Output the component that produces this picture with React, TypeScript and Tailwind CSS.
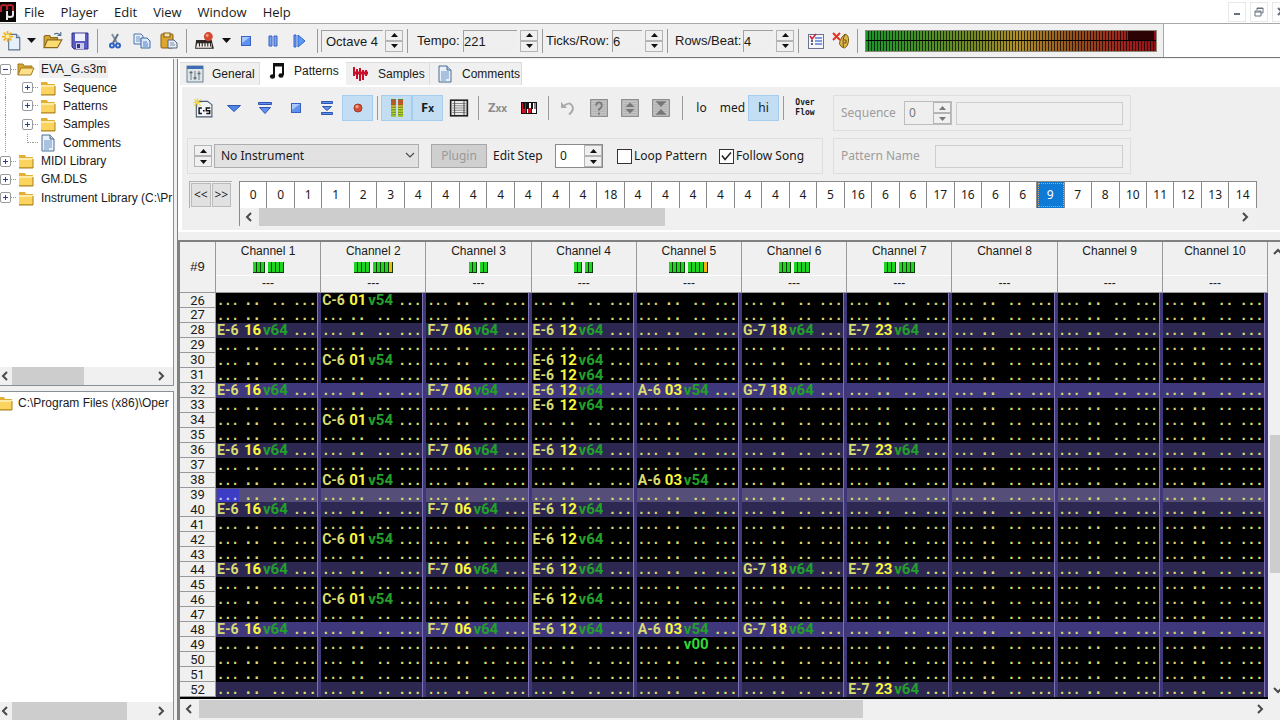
import type { ReactNode } from "react";
import clsx from "clsx";

type Cell = { note?: string; inst?: string; vol: string };

const CHANNELS = [
  { name: "Channel 1", left: 3, right: 4, peak: false },
  { name: "Channel 2", left: 4, right: 5, peak: true },
  { name: "Channel 3", left: 2, right: 2, peak: false },
  { name: "Channel 4", left: 2, right: 2, peak: false },
  { name: "Channel 5", left: 4, right: 5, peak: true },
  { name: "Channel 6", left: 3, right: 4, peak: false },
  { name: "Channel 7", left: 3, right: 4, peak: false },
  { name: "Channel 8", left: 0, right: 0, peak: false },
  { name: "Channel 9", left: 0, right: 0, peak: false },
  { name: "Channel 10", left: 0, right: 0, peak: false },
];

const ORDERS = [
  0, 0, 1, 1, 2, 3, 4, 4, 4, 4, 4, 4, 4, 18, 4, 4, 4, 4, 4, 4, 4, 5, 16, 6, 6,
  17, 16, 6, 6, 9, 7, 8, 10, 11, 12, 13, 14,
];
const CURRENT_ORDER = 29;
const PLAY_ROW = 39;
const ROWS = Array.from({ length: 27 }, (_, i) => 26 + i);

const TRACKS: { cell: Cell; rows: number[] }[] = [
  { cell: { note: "E-6", inst: "16", vol: "v64" }, rows: [28, 32, 36, 40, 44, 48] },
  { cell: { note: "C-6", inst: "01", vol: "v54" }, rows: [26, 30, 34, 38, 42, 46] },
  { cell: { note: "F-7", inst: "06", vol: "v64" }, rows: [28, 32, 36, 40, 44, 48] },
  {
    cell: { note: "E-6", inst: "12", vol: "v64" },
    rows: [28, 30, 31, 32, 33, 36, 40, 42, 44, 46, 48],
  },
  { cell: { note: "A-6", inst: "03", vol: "v54" }, rows: [32, 38, 48] },
  { cell: { note: "G-7", inst: "18", vol: "v64" }, rows: [28, 32, 44, 48] },
  { cell: { note: "E-7", inst: "23", vol: "v64" }, rows: [28, 36, 44, 52] },
];

function getCell(channel: number, row: number): Cell | undefined {
  if (channel === 4 && row === 49) return { vol: "v00" };
  const track = TRACKS[channel];
  return track?.rows.includes(row) ? track.cell : undefined;
}

/* ---------- icons ---------- */

function Svg({ size = 18, children }: { size?: number; children: ReactNode }) {
  return (
    <svg width={size} height={size} viewBox="0 0 18 18" fill="none" className="shrink-0" aria-hidden="true">
      {children}
    </svg>
  );
}

const Logo = () => (
  <svg width="16" height="20" viewBox="0 0 16 20" aria-hidden="true">
    <rect width="16" height="20" fill="#0a0505" />
    <path d="M1 10V5q0-2 3-2t3 2v3V5q0-2 3-2t3 2v4" stroke="#b3202c" strokeWidth="2" fill="none" />
    <path d="M7 18V9v4q0 2 3 2t3-2V9" stroke="#e8e8e8" strokeWidth="2" fill="none" />
  </svg>
);

const NewIcon = () => (
  <Svg size={20}>
    <path d="M6 3h7l3 3v11H6z" fill="#e6f0fb" stroke="#5d7591" />
    <path d="M13 3v3h3" stroke="#5d7591" fill="#b9d0ea" />
    <path d="M5 0v10M0 5h10M1.5 1.5l7 7M8.5 1.5l-7 7" stroke="#f2b01c" strokeWidth="1.5" />
    <circle cx="5" cy="5" r="1.8" fill="#fff3a0" />
  </Svg>
);

const FolderOpenIcon = () => (
  <Svg size={20}>
    <path d="M1 15V5l1-1h4l1 2h6v3" fill="#d8a52e" stroke="#8a6a1f" />
    <path d="M1 15l3-7h13l-4 7z" fill="#fbdc72" stroke="#8a6a1f" />
    <path d="M10 3q3-2 6 1m0-3v3h-3" stroke="#54708e" />
  </Svg>
);

const SaveIcon = () => (
  <Svg>
    <path d="M1 1h16v16H3l-2-2z" fill="#5b5bc4" stroke="#35358a" />
    <path d="M4 1.5h10V9H4z" fill="#eef0fb" />
    <path d="M5 11h8v6H5z" fill="#c9cbe6" />
    <path d="M6 12h3v4H6z" fill="#35358a" />
  </Svg>
);

const CutIcon = () => (
  <Svg>
    <path d="M6 2l5 9" stroke="#8794a6" strokeWidth="2" />
    <path d="M12 2L7 11" stroke="#5f6f85" strokeWidth="2" />
    <circle cx="6" cy="13.5" r="2" stroke="#2f63c4" strokeWidth="2" />
    <circle cx="12" cy="13.5" r="2" stroke="#2f63c4" strokeWidth="2" />
  </Svg>
);

const CopyIcon = () => (
  <Svg>
    <path d="M1 2h7l2 2v8H1z" fill="#e6f0fb" stroke="#4d74ac" />
    <path d="M3 5h4M3 7h5M3 9h5" stroke="#6c92c6" />
    <path d="M8 6h6l3 3v7H8z" fill="#dbe9fa" stroke="#3e66a4" />
    <path d="M10 10h4M10 12h5M10 14h5" stroke="#4d7cc0" />
  </Svg>
);

const PasteIcon = () => (
  <Svg>
    <rect x="1" y="2" width="12" height="14" rx="1" fill="#dda62c" stroke="#84601a" />
    <rect x="4" y="1" width="6" height="4" fill="#f6e4a6" stroke="#84601a" />
    <path d="M8 8h6l3 3v5H8z" fill="#e3ebf5" stroke="#56657a" />
    <path d="M10 11h4M10 13h5" stroke="#8393a9" />
  </Svg>
);

const MidiRecordIcon = () => (
  <Svg size={20}>
    <path d="M1 8h14l2 8H0z" fill="#2c2725" />
    <path d="M2 11h13v4H1z" fill="#f1ece8" />
    <path d="M4 10v4M6.5 10v4M9 10v4M11.5 10v4M14 10v4" stroke="#2c2725" />
    <circle cx="12" cy="5" r="4" fill="#d4482f" />
    <circle cx="11" cy="4" r="1.3" fill="#f39d86" />
  </Svg>
);

const DownTri = () => (
  <svg width="9" height="5" viewBox="0 0 9 5" aria-hidden="true">
    <path d="M0 0h9L4.5 5z" fill="#111" />
  </svg>
);

const StopIcon = () => (
  <Svg>
    <rect x="4.5" y="4.5" width="9" height="9" fill="#5f92ee" stroke="#3761c2" />
    <path d="M5 5h8l-8 6z" fill="#a9c8fb" />
  </Svg>
);

const PauseIcon = () => (
  <Svg>
    <path d="M5 4h3v10H5zM10 4h3v10h-3z" fill="#78a5f0" stroke="#3761c2" />
  </Svg>
);

const PlayIcon = () => (
  <Svg>
    <path d="M3 3h2v12H3z" fill="#78a5f0" stroke="#2d63cf" />
    <path d="M7 3l7 6-7 6z" fill="#5b9af2" stroke="#2d63cf" />
  </Svg>
);

const OptionsIcon = () => (
  <Svg>
    <rect x="1.5" y="2.5" width="15" height="14" fill="#f4f6fc" stroke="#6a7390" />
    <path d="M8 6h7M8 9h7M8 12h7" stroke="#5a7fd0" strokeWidth="1.5" />
    <path d="M4 9h2M4 12h2" stroke="#333" strokeWidth="1.5" />
    <path d="M3 4l2 3 4-5" stroke="#cf1f2b" strokeWidth="1.5" />
  </Svg>
);

const PanicIcon = () => (
  <Svg>
    <path d="M8 9l2-4 3-3q4 1 3.5 7.5-.5 5-4 6.5-3 0-5-4z" fill="#e0b94a" stroke="#7a5a14" />
    <path d="M13 3q-3 4-1.5 12" stroke="#6e5214" />
    <path d="M12 8h2v3h-2" stroke="#6e5214" />
    <path d="M1 1l7 7M8 1L1 8" stroke="#e03524" strokeWidth="2" />
  </Svg>
);

const FolderIcon = ({ open = false }: { open?: boolean }) => (
  <Svg>
    {open ? (
      <>
        <path d="M1 15V4h5l1 2h8v3" fill="#d8a52e" stroke="#a07a22" />
        <path d="M1 15l3-7h13l-3 7z" fill="#fde08a" stroke="#a07a22" />
      </>
    ) : (
      <>
        <path d="M2 3h6l1 2h7v11H2z" fill="#e2ae34" />
        <path d="M2 6h14v9H2z" fill="#fbd45f" />
        <path d="M2 6h14v2H2z" fill="#fdeaa6" />
        <path d="M2 16h14V7" stroke="#a9801f" />
      </>
    )}
  </Svg>
);

const DocIcon = () => (
  <Svg>
    <path d="M3 1h8l4 4v12H3z" fill="#e8f0fa" stroke="#4a6a94" />
    <path d="M11 1v4h4" fill="#b4cae6" stroke="#4a6a94" />
    <path d="M5 7h8M5 9h8M5 11h8M5 13h8M5 15h5" stroke="#6b93c4" />
  </Svg>
);

const GeneralIcon = () => (
  <Svg>
    <rect x="1" y="1" width="16" height="16" fill="#dfe5e6" stroke="#6c8298" />
    <path d="M1 2.5h16" stroke="#3d6db5" strokeWidth="3" />
    <path d="M5 6v9M9 6v9M13 6v9" stroke="#6c7a88" />
    <path d="M3.5 7.5h3M7.5 13h3M11.5 8.5h3" stroke="#59646e" strokeWidth="1.5" />
  </Svg>
);

const NotesIcon = () => (
  <Svg>
    <path d="M6 14V2h9v11" stroke="#111" strokeWidth="2" />
    <path d="M6 3h9" stroke="#111" strokeWidth="3" />
    <ellipse cx="4.5" cy="14.5" rx="2.6" ry="2.2" fill="#111" />
    <ellipse cx="13" cy="13.5" rx="2.6" ry="2.2" fill="#111" />
  </Svg>
);

const WaveIcon = () => (
  <Svg>
    <path d="M2 8h14" stroke="#c8102a" strokeWidth="3" />
    <path d="M2 2v9M5 4v10M8 3v13M11 5v10M14 5v6" stroke="#c8102a" strokeWidth="2" />
  </Svg>
);

const NewPatternIcon = () => (
  <Svg size={20}>
    <path d="M3 3h10l4 3v11H3z" fill="#f1f5fa" stroke="#4b5a72" />
    <path d="M4 0v8M0 4h8M1 1l6 6M7 1L1 7" stroke="#ecd94c" />
    <path d="M8 9H5.5v5H8M9 11.5h1.5M15.5 9H12v2.5h3V14h-3" stroke="#111" strokeWidth="1.3" />
  </Svg>
);

const PlayDownIcon = () => (
  <Svg>
    <path d="M2.5 6.5h13L9 12.5z" fill="#4f86ea" stroke="#2f55b0" />
  </Svg>
);

const PlayFromStartIcon = () => (
  <Svg>
    <path d="M2.5 3.5h13v2h-13zM3.5 8.5h11L9 14.5z" fill="#5f92ee" stroke="#2f55b0" />
  </Svg>
);

const PlayRowIcon = () => (
  <Svg>
    <path d="M3.5 2.5h11v2h-11zM4.5 7.5h9L9 11.5zM3.5 13.5h11v2h-11z" fill="#5f92ee" stroke="#2f55b0" />
  </Svg>
);

const RecordIcon = () => (
  <Svg>
    <circle cx="9" cy="9" r="4" fill="#d65038" stroke="#a03a2a" />
    <circle cx="8" cy="7.5" r="1.5" fill="#f6a893" />
  </Svg>
);

const MetersIcon = () => (
  <Svg>
    <path d="M3 0h5v18H3zM10 0h5v18h-5z" fill="#6d7a2c" />
    <path d="M3 2h5M10 2h5M3 4.5h5M10 4.5h5" stroke="#e0492c" strokeWidth="1.6" />
    <path d="M3 7h5M10 7h5" stroke="#efb52a" strokeWidth="1.6" />
    <path d="M3 9.5h5M10 9.5h5M3 12h5M10 12h5M3 14.5h5M10 14.5h5M3 17h5M10 17h5" stroke="#b5dc2c" strokeWidth="1.6" />
  </Svg>
);

const PatternPropsIcon = () => (
  <Svg size={20}>
    <rect x="1.5" y="2" width="15" height="14" fill="#ededed" stroke="#222" strokeWidth="1.5" />
    <path d="M3 5h12M3 7h12M3 9h12M3 11h12M3 13h12" stroke="#8b8b8b" />
    <path d="M5 3v12M13.5 3v12" stroke="#555" />
  </Svg>
);

const PianoIcon = () => (
  <Svg>
    <rect x="1.5" y="3.5" width="15" height="11" fill="#fff" stroke="#111" />
    <path d="M2 4h4v10H2zM8 9h3v5H8z" fill="#cf1126" />
    <path d="M3 4h2v6H3zM7 4h2v6H7zM11 4h2v6h-2zM14.5 4h1v6h-1z" fill="#111" />
    <path d="M6.5 4v10M11.5 4v10" stroke="#111" />
  </Svg>
);

const UndoIcon = () => (
  <Svg>
    <path d="M5 7q5-4.5 8-.5t-3 9" stroke="#aaa" strokeWidth="2" />
    <path d="M2 3v6h6z" fill="#aaa" />
  </Svg>
);

function GreyBoxIcon({ children }: { children: ReactNode }) {
  return (
    <Svg size={20}>
      <rect x="1.5" y="1.5" width="15" height="15" fill="#c6c6c6" stroke="#868686" />
      <path d="M3 4h12M3 6h12M3 8h12M3 10h12M3 12h12M3 14h12" stroke="#b2b2b2" />
      {children}
    </Svg>
  );
}

const Chevron = ({ dir, thin = false }: { dir: "left" | "right" | "up" | "down"; thin?: boolean }) => {
  const d = {
    left: "M6 1L2 5l4 4",
    right: "M3 1l4 4-4 4",
    up: "M1 7l4-4 4 4",
    down: "M1 3l4 4 4-4",
  }[dir];
  return (
    <svg width="10" height="10" viewBox="0 0 10 10" aria-hidden="true" className="shrink-0">
      <path d={d} fill="none" stroke="#4a4a4a" strokeWidth={thin ? 1.2 : 2} />
    </svg>
  );
};

/* ---------- small controls ---------- */

function IconButton({
  label,
  width = "w-[27px]",
  children,
}: {
  label: string;
  width?: string;
  children: ReactNode;
}) {
  return (
    <button aria-label={label} className={clsx("flex h-7 shrink-0 items-center justify-center", width)}>
      {children}
    </button>
  );
}

function Sep() {
  return (
    <div className="flex h-6 w-2 shrink-0 justify-center">
      <div className="w-px bg-[#9a9a9a]" />
    </div>
  );
}

function Spinner({ label, disabled = false }: { label: string; disabled?: boolean }) {
  const fill = disabled ? "#777" : "#111";
  const button = "flex flex-1 items-center justify-center border border-[#b4b4b4] bg-[#f0f0f0]";
  return (
    <div className="flex h-[22px] w-[18px] shrink-0 flex-col">
      <button aria-label={`${label} up`} disabled={disabled} className={button}>
        <svg width="7" height="4" viewBox="0 0 7 4" aria-hidden="true">
          <path d="M0 4h7L3.5 0z" fill={fill} />
        </svg>
      </button>
      <button aria-label={`${label} down`} disabled={disabled} className={button}>
        <svg width="7" height="4" viewBox="0 0 7 4" aria-hidden="true">
          <path d="M0 0h7L3.5 4z" fill={fill} />
        </svg>
      </button>
    </div>
  );
}

function BarField({
  id,
  label,
  value,
  labelClass,
  inputClass,
}: {
  id: string;
  label: string;
  value: string;
  labelClass: string;
  inputClass: string;
}) {
  return (
    <>
      <label htmlFor={id} className={clsx("shrink-0 whitespace-nowrap", labelClass)}>
        {label}
      </label>
      <input
        id={id}
        defaultValue={value}
        className={clsx("mr-[3px] h-[22px] shrink-0 border-l border-t border-[#a0a0a0] bg-[#efefef]", inputClass)}
      />
      <Spinner label={label} />
    </>
  );
}

function HScroll({ thumb, rest, lead = "w-3" }: { thumb: string; rest: string; lead?: string }) {
  return (
    <div className="flex h-[18px] shrink-0 items-stretch bg-[#f0f0f0]">
      <button aria-label="Scroll left" className={clsx("flex shrink-0 items-center justify-center overflow-hidden", lead)}>
        <Chevron dir="left" />
      </button>
      <div className={clsx("bg-[#cdcdcd]", thumb)} />
      <div className={rest} />
      <button aria-label="Scroll right" className="flex w-6 shrink-0 items-center justify-center">
        <Chevron dir="right" />
      </button>
    </div>
  );
}

/* ---------- top bars ---------- */

function MenuBar() {
  return (
    <header className="flex h-[23px] shrink-0 items-center bg-white font-['Open_Sans','Noto_Sans',sans-serif] text-[13px]">
      <Logo />
      <nav className="flex gap-4 pl-2">
        {["File", "Player", "Edit", "View", "Window", "Help"].map((item) => (
          <button key={item} className="leading-5">
            {item}
          </button>
        ))}
      </nav>
      <div className="-mr-2.5 ml-auto flex gap-1">
        <button aria-label="Minimize" className="flex h-5 w-[18px] items-center justify-center border border-[#e8e8e8]">
          <svg width="8" height="8" viewBox="0 0 8 8" aria-hidden="true">
            <path d="M1 6h6" stroke="#66737e" strokeWidth="2" />
          </svg>
        </button>
        <button aria-label="Restore" className="flex h-5 w-[18px] items-center justify-center border border-[#e8e8e8]">
          <svg width="10" height="10" viewBox="0 0 10 10" fill="none" stroke="#66737e" aria-hidden="true">
            <path d="M3 3V1h6v5H7M3 1.5h6" />
            <path d="M1 4h6v5H1zM1 5h6" />
          </svg>
        </button>
        <button aria-label="Close" className="flex h-5 w-[18px] items-center justify-center border border-[#e8e8e8]">
          <svg width="9" height="9" viewBox="0 0 9 9" aria-hidden="true">
            <path d="M1 1l7 7M8 1L1 8" stroke="#66737e" strokeWidth="2" />
          </svg>
        </button>
      </div>
    </header>
  );
}

function VuMeter() {
  return (
    <div className="ml-1 flex h-[22px] w-[292px] flex-col gap-px border border-[#8a8a7a] bg-black">
      {["L", "R"].map((side) => (
        <div
          key={side}
          className="flex flex-1 justify-end bg-[repeating-linear-gradient(90deg,transparent_0px,transparent_2px,#000000b0_2px,#000000b0_3px),linear-gradient(90deg,#18962a,#7d8a20_40%,#b09028_52%,#94501c_72%,#a0201c_90%,#901018)]"
        >
          {side === "L" && <div className="mr-0.5 w-[26px] bg-[#2c0204]" />}
        </div>
      ))}
    </div>
  );
}

function MainToolbar() {
  return (
    <div className="flex h-[35px] shrink-0 border-y border-b-[#777] border-t-[#a8a8a8] bg-white text-[13px]">
      <div className="flex items-center border-r border-[#a8a8a8] bg-[#f0f0f0] pr-1.5">
        <IconButton label="New" width="w-6"><NewIcon /></IconButton>
        <IconButton label="New menu" width="w-[15px]"><DownTri /></IconButton>
        <IconButton label="Open"><FolderOpenIcon /></IconButton>
        <IconButton label="Save"><SaveIcon /></IconButton>
        <Sep />
        <IconButton label="Cut"><CutIcon /></IconButton>
        <IconButton label="Copy"><CopyIcon /></IconButton>
        <IconButton label="Paste"><PasteIcon /></IconButton>
        <Sep />
        <IconButton label="Record MIDI" width="w-[30px]"><MidiRecordIcon /></IconButton>
        <IconButton label="MIDI menu" width="w-3"><DownTri /></IconButton>
        <IconButton label="Stop"><StopIcon /></IconButton>
        <IconButton label="Pause"><PauseIcon /></IconButton>
        <IconButton label="Play"><PlayIcon /></IconButton>
        <Sep />
        <input
          aria-label="Base octave"
          defaultValue="Octave 4"
          className="mr-0.5 h-[22px] w-[62px] border-l border-t border-[#a0a0a0] bg-[#f0f0f0] pl-1"
        />
        <Spinner label="Octave" />
        <Sep />
        <BarField id="tempo" label="Tempo:" value="221" labelClass="w-[52px] pl-1.5" inputClass="w-[54px]" />
        <Sep />
        <BarField id="ticks" label="Ticks/Row:" value="6" labelClass="w-[66px]" inputClass="w-[30px]" />
        <Sep />
        <BarField id="beat" label="Rows/Beat:" value="4" labelClass="w-[72px] pl-1" inputClass="w-[30px]" />
        <Sep />
        <IconButton label="Song options"><OptionsIcon /></IconButton>
        <IconButton label="Panic" width="w-6"><PanicIcon /></IconButton>
        <Sep />
        <VuMeter />
      </div>
    </div>
  );
}

/* ---------- left side ---------- */

const TREE = [
  { label: "EVA_G.s3m", depth: 0, icon: "open" },
  { label: "Sequence", depth: 1, icon: "folder" },
  { label: "Patterns", depth: 1, icon: "folder" },
  { label: "Samples", depth: 1, icon: "folder" },
  { label: "Comments", depth: 1, icon: "doc" },
  { label: "MIDI Library", depth: 0, icon: "folder" },
  { label: "GM.DLS", depth: 0, icon: "folder" },
  { label: "Instrument Library (C:\\Pr", depth: 0, icon: "folder" },
];

function Expander({ open }: { open: boolean }) {
  return (
    <button
      aria-label={open ? "Collapse" : "Expand"}
      className="flex h-[11px] w-[11px] shrink-0 items-center justify-center rounded-xs border border-[#9a9a9a] bg-white"
    >
      <svg width="7" height="7" viewBox="0 0 7 7" aria-hidden="true">
        <path d={open ? "M1 3.5h5" : "M1 3.5h5M3.5 1v5"} stroke="#2c3f9a" />
      </svg>
    </button>
  );
}

function TreePanel() {
  return (
    <div className="flex flex-[325] flex-col overflow-hidden border-b border-r border-[#8a8f98] bg-white">
      <ul className="grid h-[148px] grid-rows-8 whitespace-nowrap pt-px">
        {TREE.map((item) => (
          <li key={item.label} className="flex items-center">
            {item.depth === 1 && (
              <span className="ml-[5px] mr-[16px] h-full w-0 border-l border-dotted border-[#999]" />
            )}
            {item.icon === "doc" ? (
              <span className="ml-[5px] h-1/2 w-1.5 self-start border-b border-l border-dotted border-[#999]" />
            ) : (
              <Expander open={item.icon === "open"} />
            )}
            <span className="mr-px w-[5px] border-t border-dotted border-[#999]" />
            {item.icon === "doc" ? <DocIcon /> : <FolderIcon open={item.icon === "open"} />}
            <span className={clsx("ml-1 px-0.5 leading-[18px]", item.icon === "open" && "bg-[#efefef]")}>
              {item.label}
            </span>
          </li>
        ))}
      </ul>
      <div className="mt-auto">
        <HScroll thumb="flex-[72]" rest="flex-[65]" />
      </div>
    </div>
  );
}

function BrowserPanel() {
  return (
    <div className="mt-[5px] flex flex-[328] flex-col overflow-hidden border-r border-t border-[#8a8f98] bg-white">
      <div className="-ml-1 flex h-[23px] items-center gap-1 whitespace-nowrap">
        <FolderIcon />
        <span>C:\Program Files (x86)\Oper</span>
      </div>
      <div className="mt-auto">
        <HScroll thumb="flex-[115]" rest="flex-[22]" />
      </div>
    </div>
  );
}

/* ---------- pattern editor ---------- */

const TABS = [
  { label: "General", icon: <GeneralIcon />, width: "w-20" },
  { label: "Patterns", icon: <NotesIcon />, width: "w-[86px]" },
  { label: "Samples", icon: <WaveIcon />, width: "w-[84px]" },
  { label: "Comments", icon: <DocIcon />, width: "w-[92px]" },
];

function Tabs() {
  return (
    <div role="tablist" className="flex h-[26px] shrink-0 items-end bg-white pl-0.5">
      {TABS.map((tab) => {
        const active = tab.label === "Patterns";
        return (
          <button
            key={tab.label}
            role="tab"
            aria-selected={active}
            className={clsx(
              "flex items-center gap-2",
              tab.width,
              active
                ? "h-[26px] bg-white pb-0.5 pl-2"
                : "h-[23px] border-r border-t border-[#dcdcdc] bg-[#f0f0f0] pl-1.5",
            )}
          >
            {tab.icon}
            {tab.label}
          </button>
        );
      })}
    </div>
  );
}

function ToolButton({ label, on = false, children }: { label: string; on?: boolean; children: ReactNode }) {
  return (
    <button
      aria-label={label}
      aria-pressed={on}
      className={clsx(
        "flex h-[26px] w-[31px] shrink-0 items-center justify-center border",
        on ? "border-[#a5cdf0] bg-[#c3ddf3]" : "border-transparent",
      )}
    >
      {children}
    </button>
  );
}

function PatternToolbar() {
  return (
    <div className="flex h-[26px] items-center">
      <ToolButton label="New pattern"><NewPatternIcon /></ToolButton>
      <ToolButton label="Play pattern from cursor"><PlayDownIcon /></ToolButton>
      <ToolButton label="Play pattern from start"><PlayFromStartIcon /></ToolButton>
      <ToolButton label="Stop"><StopIcon /></ToolButton>
      <ToolButton label="Play row"><PlayRowIcon /></ToolButton>
      <ToolButton label="Record" on><RecordIcon /></ToolButton>
      <Sep />
      <ToolButton label="VU meters" on><MetersIcon /></ToolButton>
      <ToolButton label="Effects" on>
        <span className="text-[13px] font-bold">F<span className="text-[10px]">x</span></span>
      </ToolButton>
      <ToolButton label="Pattern properties"><PatternPropsIcon /></ToolButton>
      <Sep />
      <ToolButton label="Macros">
        <span className="text-[13px] font-bold text-[#8d8d8d]">Z<span className="text-[10px]">xx</span></span>
      </ToolButton>
      <ToolButton label="Chord editor"><PianoIcon /></ToolButton>
      <Sep />
      <ToolButton label="Undo"><UndoIcon /></ToolButton>
      <ToolButton label="Help">
        <GreyBoxIcon>
          <path d="M6.5 7q0-3 2.5-3t2.5 2.5T9 10v1.5M9 13v2" stroke="#777" strokeWidth="1.5" />
        </GreyBoxIcon>
      </ToolButton>
      <ToolButton label="Expand pattern">
        <GreyBoxIcon><path d="M5 8l4-4 4 4zM5 10l4 4 4-4z" fill="#777" /></GreyBoxIcon>
      </ToolButton>
      <ToolButton label="Shrink pattern">
        <GreyBoxIcon><path d="M4 3h10L9 8zM4 15h10l-5-5z" fill="#777" /></GreyBoxIcon>
      </ToolButton>
      <div className="ml-0.5 flex items-center">
        <Sep />
        <ToolButton label="Low detail">lo</ToolButton>
        <ToolButton label="Medium detail">med</ToolButton>
        <ToolButton label="High detail" on>hi</ToolButton>
        <Sep />
      </div>
      <button className="w-9 text-center font-['DejaVu_Sans_Mono',monospace] text-[8px] font-bold leading-[10px]">
        Over Flow
      </button>
    </div>
  );
}

function InstrumentBar() {
  return (
    <div className="mt-[17px] flex h-9 items-center border border-[#dedede] px-1.5">
      <Spinner label="Instrument" />
      <div className="relative ml-0.5 h-6 w-[205px]">
        <select
          aria-label="Instrument"
          className="h-full w-full appearance-none border border-[#adadad] bg-[#e2e2e2] pl-1.5"
        >
          <option>No Instrument</option>
        </select>
        <span className="pointer-events-none absolute right-1 top-1.5">
          <Chevron dir="down" thin />
        </span>
      </div>
      <button disabled className="ml-3 h-6 w-14 border border-[#a8a8a8] bg-[#cfcfcf] text-[#9a9a9a]">
        Plugin
      </button>
      <label htmlFor="step" className="ml-1.5 w-[62px] whitespace-nowrap">
        Edit Step
      </label>
      <div className="flex h-6 border border-[#8a8a8a] bg-white">
        <input id="step" defaultValue="0" className="w-7 pl-1" />
        <Spinner label="Edit step" />
      </div>
      <label className="ml-3.5 flex items-center gap-0.5 whitespace-nowrap">
        <input type="checkbox" className="h-[15px] w-[15px] appearance-none border border-[#333] bg-white" />
        Loop Pattern
      </label>
      <label className="relative ml-3 flex items-center gap-0.5 whitespace-nowrap">
        <input
          type="checkbox"
          defaultChecked
          className="h-[15px] w-[15px] appearance-none border border-[#333] bg-white"
        />
        <svg
          width="15"
          height="15"
          viewBox="0 0 15 15"
          className="pointer-events-none absolute left-0 top-1/2 -translate-y-1/2"
          aria-hidden="true"
        >
          <path d="M3 7l3 4 6-7" fill="none" stroke="#222" strokeWidth="1.5" />
        </svg>
        Follow Song
      </label>
    </div>
  );
}

function SequenceBoxes() {
  return (
    <div className="flex w-[298px] flex-col gap-[7px] text-[#9c9c9c]">
      <div className="flex h-9 items-center border border-[#dedede] px-[7px]">
        <label htmlFor="seq" className="w-[63px]">
          Sequence
        </label>
        <div className="flex h-6 border border-[#bdbdbd]">
          <input id="seq" disabled defaultValue="0" className="w-7 pl-1 text-[#777]" />
          <Spinner label="Sequence" disabled />
        </div>
        <input aria-label="Sequence name" disabled className="ml-1 h-[23px] min-w-0 flex-1 border border-[#cdcdcd]" />
      </div>
      <div className="flex h-9 items-center border border-[#dedede] px-[7px]">
        <label htmlFor="pattern-name" className="w-[94px]">
          Pattern Name
        </label>
        <input id="pattern-name" disabled className="h-[23px] min-w-0 flex-1 border border-[#cdcdcd]" />
      </div>
    </div>
  );
}

function OrderList() {
  return (
    <div className="mr-[23px] mt-[7px] flex pl-0.5">
      <div className="flex h-[27px] w-[43px] items-stretch gap-px border-l border-t border-[#b0b0b0] p-px">
        <button className="flex-1 border border-[#bbb] bg-[#e1e1e1]">&lt;&lt;</button>
        <button className="flex-1 border border-[#bbb] bg-[#e1e1e1]">&gt;&gt;</button>
      </div>
      <div className="ml-[7px] min-w-0 flex-1 border-l border-t border-[#8a8a8a]">
        <div className="flex h-[26px]">
          {ORDERS.map((order, i) => (
            <button
              key={i}
              className={clsx(
                "min-w-0 flex-1 border-r border-[#8a8a8a]",
                i === CURRENT_ORDER ? "bg-[#0f7ad6] text-white outline-1 -outline-offset-2 outline-dotted outline-[#d9a066]" : "bg-white",
              )}
            >
              {order}
            </button>
          ))}
        </div>
        <HScroll lead="w-[19px]" thumb="flex-[406]" rest="flex-[568]" />
      </div>
    </div>
  );
}

function ChannelMeter({ count, peak }: { count: number; peak: boolean }) {
  return (
    <span className="flex h-[11px]">
      {Array.from({ length: count }, (_, i) => (
        <span
          key={i}
          className={clsx(
            "w-1 border-b border-r border-[#0a3c08]",
            peak && i === count - 1 ? "bg-[#f2b414]" : "bg-[#1fd322]",
          )}
        />
      ))}
    </span>
  );
}

function PatternCell({ cell, cursor }: { cell?: Cell; cursor: boolean }) {
  return (
    <td className="grid grid-cols-[27px_19px_30px_1fr] items-baseline whitespace-nowrap border-r-[3px] border-[#40377a] pl-px font-['DejaVu_Sans_Mono',monospace] text-[13px] leading-[14px] font-bold text-[#d8dc70] shadow-[inset_-1px_0_0_#7d74b4]">
      {cell?.note ? (
        <span className="font-['Roboto',sans-serif] text-[14px]">{cell.note}</span>
      ) : (
        <span className="text-[12px]">
          <span className={clsx(cursor && "bg-[#3c3cc4] text-[#c8c8ff]")}>...</span>
        </span>
      )}
      {cell?.inst ? (
        <span className="font-['Roboto',sans-serif] text-[15px] text-[#fbf83c]">{cell.inst}</span>
      ) : (
        <span className="text-[14px]">..</span>
      )}
      {cell ? (
        <span
          className={clsx(
            "font-['Roboto',sans-serif] text-[15px]",
            cell.note ? "text-[#22a02a]" : "text-[#2fd838]",
          )}
        >
          {cell.vol}
        </span>
      ) : (
        <span className="pl-2">..</span>
      )}
      <span>...</span>
    </td>
  );
}

function PatternGrid() {
  const cols = "grid grid-cols-[36px_repeat(10,minmax(0,1fr))]";
  return (
    <div className="flex min-h-0 flex-1 border-l-2 border-t-2 border-[#808080]">
      <div className="flex min-w-0 flex-1 flex-col">
        <div className="flex min-h-0 flex-1">
          <table className="flex min-w-0 flex-1 flex-col">
            <thead className="block shrink-0 bg-[#f0f0f0]">
              <tr className={cols}>
                <th className="flex h-[51px] items-center justify-center border-b border-r border-[#999] text-[13px] font-normal">
                  #9
                </th>
                {CHANNELS.map((ch) => (
                  <th key={ch.name} className="flex flex-col items-center border-b border-r border-[#999] font-normal">
                    <span className="leading-[19px]">{ch.name}</span>
                    <span className="flex h-[14px] gap-[3px] pt-px">
                      <ChannelMeter count={ch.left} peak={false} />
                      <ChannelMeter count={ch.right} peak={ch.peak} />
                    </span>
                    <span className="w-full border-t border-white leading-[15px]">---</span>
                  </th>
                ))}
              </tr>
            </thead>
            <tbody className="grid min-h-0 flex-1 grid-rows-[repeat(27,minmax(0,1fr))] overflow-hidden bg-black pb-0.5">
              {ROWS.map((row) => (
                <tr
                  key={row}
                  className={clsx(
                    cols,
                    "min-h-0",
                    row === PLAY_ROW && "bg-[#544e78]",
                    row % 16 === 0 && "bg-[#40387c]",
                    row % 4 === 0 && row % 16 !== 0 && "bg-[#2d2852]",
                  )}
                >
                  <th className="flex items-center justify-center border-b border-r border-[#999] bg-[#f0f0f0] font-['Roboto',sans-serif] text-[13px] font-normal leading-[13px]">
                    {row}
                  </th>
                  {CHANNELS.map((ch, i) => (
                    <PatternCell key={ch.name} cell={getCell(i, row)} cursor={i === 0 && row === PLAY_ROW} />
                  ))}
                </tr>
              ))}
            </tbody>
          </table>
          <div className="ml-0.5 flex w-2.5 flex-col overflow-hidden bg-[#f0f0f0]">
            <button aria-label="Scroll up" className="flex h-5 items-center pl-[3px]">
              <Chevron dir="up" />
            </button>
            <div className="flex-[173]" />
            <div className="flex-[138] bg-[#cdcdcd]" />
            <div className="flex-[108]" />
            <button aria-label="Scroll down" className="flex h-[18px] items-center pl-[3px]">
              <Chevron dir="down" />
            </button>
          </div>
        </div>
        <div className="mr-2 pb-0.5 pt-px">
          <HScroll lead="w-[19px]" thumb="flex-[665]" rest="flex-[386]" />
        </div>
      </div>
    </div>
  );
}

export default function App() {
  return (
    <div className="flex h-screen flex-col overflow-hidden bg-[#f0f0f0] font-['Liberation_Sans',Arial,sans-serif] text-[12px] text-[#1a1a1a]">
      <MenuBar />
      <MainToolbar />
      <main className="flex min-h-0 flex-1 pt-px">
        <aside className="flex w-[174px] shrink-0 flex-col">
          <TreePanel />
          <BrowserPanel />
        </aside>
        <section className="ml-[3px] flex min-w-0 flex-1 flex-col border-l border-[#808080]">
          <Tabs />
          <div className="border-b-2 border-l-4 border-t-2 border-white bg-[#efefef] pb-1 pl-[5px] pt-2 font-['Noto_Sans','Open_Sans',sans-serif]">
            <div className="flex gap-2.5">
              <div className="w-[636px] shrink-0">
                <PatternToolbar />
                <InstrumentBar />
              </div>
              <SequenceBoxes />
            </div>
            <OrderList />
          </div>
          <div className="mt-2 flex min-h-0 flex-1 flex-col">
            <PatternGrid />
          </div>
        </section>
      </main>
    </div>
  );
}
